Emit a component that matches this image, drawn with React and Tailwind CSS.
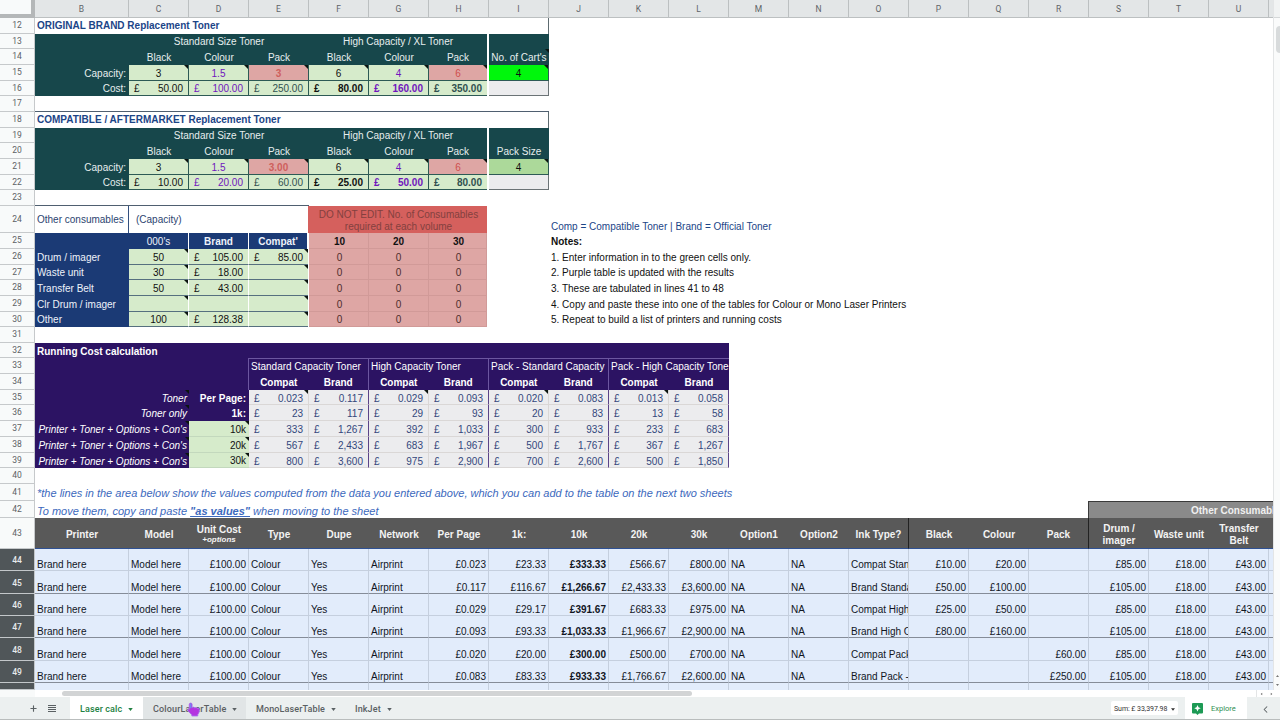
import { Plus, ChevronLeft } from "lucide-react";

const columns = "CDEFGHIJKLMNOPQRSTU".split("");

const TEAL = "bg-[#17474b] text-[#e6eeee]";
const GREEN = "bg-[#d6ebcb]";
const PINK = "bg-[#dea6a4]";
const NAVY = "bg-[#1b3a75] text-[#eef2fa]";
const PURPLE = "bg-[#2c1363] text-white";
const PURPLE_TEXT = "text-[#7015bd]";
const GRAY = "bg-[#ececee]";

const SELECTED = [
    { n: 44, h: "h-[22px]", perPage: "£0.023", k1: "£23.33", k10: "£333.33", k20: "£566.67", k30: "£800.00", ink: "Compat Stan", black: "£10.00", colour: "£20.00", pack: "", drum: "£85.00" },
    { n: 45, h: "h-[23px]", perPage: "£0.117", k1: "£116.67", k10: "£1,266.67", k20: "£2,433.33", k30: "£3,600.00", ink: "Brand Standa", black: "£50.00", colour: "£100.00", pack: "", drum: "£105.00" },
    { n: 46, h: "h-[22px]", perPage: "£0.029", k1: "£29.17", k10: "£391.67", k20: "£683.33", k30: "£975.00", ink: "Compat High", black: "£25.00", colour: "£50.00", pack: "", drum: "£85.00" },
    { n: 47, h: "h-[22px]", perPage: "£0.093", k1: "£93.33", k10: "£1,033.33", k20: "£1,966.67", k30: "£2,900.00", ink: "Brand High C", black: "£80.00", colour: "£160.00", pack: "", drum: "£105.00" },
    { n: 48, h: "h-[23px]", perPage: "£0.020", k1: "£20.00", k10: "£300.00", k20: "£500.00", k30: "£700.00", ink: "Compat Pack", black: "", colour: "", pack: "£60.00", drum: "£85.00" },
    { n: 49, h: "h-[22px]", perPage: "£0.083", k1: "£83.33", k10: "£933.33", k20: "£1,766.67", k30: "£2,600.00", ink: "Brand Pack -", black: "", colour: "", pack: "£250.00", drum: "£105.00" },
];

const running = [
    { n: 35, h: "h-[15px]", label: "Toner", unit: "Per Page:", v: ["0.023", "0.117", "0.029", "0.093", "0.020", "0.083", "0.013", "0.058"] },
    { n: 36, h: "h-[16px]", label: "Toner only", unit: "1k:", v: ["23", "117", "29", "93", "20", "83", "13", "58"] },
    { n: 37, h: "h-[16px]", label: "Printer + Toner + Options + Con's", unit: "10k", v: ["333", "1,267", "392", "1,033", "300", "933", "233", "683"] },
    { n: 38, h: "h-[16px]", label: "Printer + Toner + Options + Con's", unit: "20k", v: ["567", "2,433", "683", "1,967", "500", "1,767", "367", "1,267"] },
    { n: 39, h: "h-[15px]", label: "Printer + Toner + Options + Con's", unit: "30k", v: ["800", "3,600", "975", "2,900", "700", "2,600", "500", "1,850"] },
];

const consumables = [
    { n: 26, h: "h-[16px]", name: "Drum / imager", cap: "50", brand: "105.00", compat: "85.00", note: "1. Enter information in to the green cells only." },
    { n: 27, h: "h-[15px]", name: "Waste unit", cap: "30", brand: "18.00", note: "2. Purple table is updated with the results" },
    { n: 28, h: "h-[16px]", name: "Transfer Belt", cap: "50", brand: "43.00", note: "3. These are tabulated in lines 41 to 48" },
    { n: 29, h: "h-[16px]", name: "Clr Drum / imager", cap: "", brand: "", note: "4. Copy and paste these into one of the tables for Colour or Mono Laser Printers" },
    { n: 30, h: "h-[15px]", name: "Other", cap: "100", brand: "128.38", note: "5. Repeat to build a list of printers and running costs" },
];

function Row({ n, h = "h-[16px]", selected, children }) {
    return (
        <div className={`flex shrink-0 ${h}`}>
            <div
                className={`flex w-[35px] shrink-0 items-center justify-center border-r border-b font-[Roboto,sans-serif] text-[8.5px] leading-none ${
                    selected
                        ? "border-[#c3c7ca] bg-[#505659] pt-0.5 font-medium text-[#e8eaed]"
                        : "border-[#c6c9cb] bg-[#f8fafa] text-[#5c6164]"
                }`}
            >
                {n}
            </div>
            {children}
        </div>
    );
}

function Cell({ w = "w-15", align = "justify-center", pad = "pt-px", className = "", note, children }) {
    return (
        <div className={`relative flex shrink-0 items-center whitespace-nowrap ${w} ${align} ${pad} ${className}`}>
            {children}
            {note && (
                <span className="absolute top-0 right-0 border-t-4 border-l-4 border-t-[#0b1410] border-l-transparent" />
            )}
        </div>
    );
}

function Money({ value, className = "", ...rest }) {
    return (
        <Cell align="justify-between" pad="pt-0.5" className={`pr-[5px] pl-[5px] ${className}`} {...rest}>
            {value && <span>£</span>}
            <span>{value}</span>
        </Cell>
    );
}

function Gap() {
    return <div className="w-0.5 shrink-0 bg-white" />;
}

function TonerTable({ start, title, pack, packNote, packColor, packCap, black, colour, packs, high }) {
    const line = "border-r border-b border-[#2d5a55]";
    return (
        <>
            <Row n={start}>
                <Cell w="w-[514px]" align="justify-start" pad="pt-0" className="border-r border-[#5d6b70] pl-0.5 font-bold text-[#1c4587]">
                    {title}
                </Cell>
            </Row>
            <Row n={start + 1} h="h-[15px]">
                <Cell w="w-[94px]" className={TEAL} />
                <Cell w="w-45" className={TEAL}>Standard Size Toner</Cell>
                <Cell w="w-[178px]" className={TEAL}>High Capacity / XL Toner</Cell>
                <Gap />
                <Cell className={TEAL} />
            </Row>
            <Row n={start + 2}>
                <Cell w="w-[94px]" className={TEAL} />
                <Cell className={TEAL}>Black</Cell>
                <Cell className={TEAL}>Colour</Cell>
                <Cell className={TEAL}>Pack</Cell>
                <Cell className={TEAL}>Black</Cell>
                <Cell className={TEAL}>Colour</Cell>
                <Cell w="w-[58px]" className={TEAL}>Pack</Cell>
                <Gap />
                <Cell className={TEAL} note={packNote}>{pack}</Cell>
            </Row>
            <Row n={start + 3}>
                <Cell w="w-[94px]" align="justify-end" className={`${TEAL} pr-[3px]`}>Capacity:</Cell>
                <Cell pad="pt-0.5" note className={`${GREEN} ${line}`}>3</Cell>
                <Cell pad="pt-0.5" note className={`${GREEN} ${line} ${PURPLE_TEXT}`}>1.5</Cell>
                <Cell pad="pt-0.5" note className={`${PINK} ${line} font-bold text-[#cf5f5c]`}>{packCap}</Cell>
                <Cell pad="pt-0.5" note className={`${GREEN} ${line}`}>6</Cell>
                <Cell pad="pt-0.5" note className={`${GREEN} ${line} ${PURPLE_TEXT}`}>4</Cell>
                <Cell pad="pt-0.5" note w="w-[58px]" className={`${PINK} border-b border-[#2d5a55] text-[#cf4f4c]`}>6</Cell>
                <Gap />
                <Cell pad="pt-0.5" note className={`${packColor} ${line}`}>4</Cell>
            </Row>
            <Row n={start + 4} h="h-[15px]">
                <Cell w="w-[94px]" align="justify-end" className={`${TEAL} pr-[3px]`}>Cost:</Cell>
                <Money value={black} className={`${GREEN} ${line}`} />
                <Money value={colour} className={`${GREEN} ${line} ${PURPLE_TEXT}`} />
                <Money value={packs} className={`${GREEN} ${line} text-[#31504f]`} />
                <Money value={high[0]} className={`${GREEN} ${line} font-bold`} />
                <Money value={high[1]} className={`${GREEN} ${line} font-bold ${PURPLE_TEXT}`} />
                <Money w="w-[58px]" value={high[2]} className={`${GREEN} border-b border-[#2d5a55] font-bold text-[#31504f]`} />
                <Gap />
                <Cell className={`${GRAY} border-r border-b border-[#6b7376]`} />
            </Row>
            <Row n={start + 5}>
                <Cell w={start === 12 ? "w-[514px]" : "w-[274px]"} className="border-b border-[#4f5f70]" />
            </Row>
        </>
    );
}

function Consumables() {
    return (
        <>
            <Row n={24} h="h-[27px]">
                <Cell w="w-[94px]" align="justify-start" className="border-r border-[#33507f] pl-0.5 text-[#2c4470]">
                    Other consumables
                </Cell>
                <Cell w="w-[179px]" align="justify-start" className="pl-[7px] text-[#2c4470]">
                    (Capacity)
                </Cell>
                <Cell w="w-[179px]" pad="pt-0.5" className="bg-[#d5605d] pl-0.5 text-center leading-3 text-[#83403f]">
                    DO NOT EDIT. No. of Consumables
                    <br />
                    required at each volume
                </Cell>
                <Cell w="w-[300px]" align="justify-start" pad="pt-[14px]" className="pl-[64px] text-[#1c4587]">
                    Comp = Compatible Toner | Brand = Official Toner
                </Cell>
            </Row>
            <Row n={25}>
                <Cell w="w-[94px]" className={NAVY} />
                <Cell className={`${NAVY} border-r border-white`}>000's</Cell>
                <Cell className={`${NAVY} border-r border-white font-bold`}>Brand</Cell>
                <Cell w="w-[58px]" className={`${NAVY} font-bold`}>Compat'</Cell>
                <Gap />
                {["10", "20", "30"].map((v, i) => (
                    <Cell
                        key={v}
                        pad="pt-0.5"
                        w={i === 2 ? "w-[58px]" : "w-15"}
                        className={`${PINK} border-r border-b border-[#d19a98] font-bold ${i === 1 ? "" : "pl-0.5"}`}
                    >
                        {v}
                    </Cell>
                ))}
                <Cell align="justify-start" className="pl-[64px] font-bold">Notes:</Cell>
            </Row>
            {consumables.map((c) => (
                <Row key={c.n} n={c.n} h={c.h}>
                    <Cell w="w-[94px]" align="justify-start" className={`${NAVY} pl-0.5`}>{c.name}</Cell>
                    <Cell pad="pt-0.5" note className={`${GREEN} border-r border-b border-r-white border-b-[#56707f]`}>{c.cap}</Cell>
                    <Money value={c.brand} className={`${GREEN} border-r border-b border-r-white border-b-[#56707f]`} />
                    <Money note w="w-[59px]" value={c.compat} className={`${GREEN} border-b border-b-[#56707f]`} />
                    <div className="w-px shrink-0 bg-white" />
                    {[0, 1, 2].map((i) => (
                        <Cell
                            key={i}
                            pad="pt-0.5"
                            w={i === 2 ? "w-[58px]" : "w-15"}
                            className={`${PINK} border-r border-b border-[#d19a98] text-[#4d2c2c] ${i === 1 ? "" : "pl-0.5"}`}
                        >
                            0
                        </Cell>
                    ))}
                    <Cell align="justify-start" className="pl-[64px]">{c.note}</Cell>
                </Row>
            ))}
        </>
    );
}

function RunningCosts() {
    const groups = ["Standard Capacity Toner", "High Capacity Toner", "Pack - Standard Capacity", "Pack - High Capacity Tone"];
    return (
        <>
            <Row n={32} h="h-[15px]">
                <Cell w="w-[694px]" align="justify-start" pad="pt-0.5" className={`${PURPLE} pl-0.5 font-bold`}>
                    Running Cost calculation
                </Cell>
            </Row>
            <Row n={33}>
                <Cell w="w-[213px]" className={PURPLE} />
                {groups.map((g, i) => (
                    <Cell
                        key={g}
                        w={i === 3 ? "w-[121px]" : "w-30"}
                        align="justify-start"
                        className={`${PURPLE} border-t border-l border-[#6c56a0] pl-0.5 text-[#ece6f7]`}
                    >
                        {g}
                    </Cell>
                ))}
            </Row>
            <Row n={34}>
                <Cell w="w-[213px]" className={PURPLE} />
                {groups.map((g, i) => (
                    <Cell key={g} w={i === 3 ? "w-[121px]" : "w-30"} className={`${PURPLE} border-l border-[#6c56a0] font-bold`}>
                        <span className="w-15 text-center">Compat</span>
                        <span className="w-15 text-center">Brand</span>
                    </Cell>
                ))}
            </Row>
            {running.map((r) => (
                <Row key={r.n} n={r.n} h={r.h}>
                    <Cell note w="w-[154px]" align="justify-end" pad="pt-0.5" className={`${PURPLE} pr-0.5 italic`}>
                        {r.label}
                    </Cell>
                    <Cell
                        note={r.n > 36}
                        align="justify-end"
                        pad="pt-0.5"
                        className={r.n > 36 ? `${GREEN} border-b border-[#c3d8bd] pr-[3px]` : `${PURPLE} pr-[3px] font-bold`}
                    >
                        {r.unit}
                    </Cell>
                    {r.v.map((v, i) => (
                        <Money
                            key={i}
                            value={v}
                            note={r.n === 35 && i % 2 === 0}
                            pad="pt-[3px]"
                            className={`${GRAY} border-r border-b border-b-[#dad7d6] text-[#33477c] ${
                                i % 2 ? "border-r-[#5b4488]" : "border-r-[#dad7d6]"
                            }`}
                        />
                    ))}
                </Row>
            ))}
        </>
    );
}

function Results() {
    const heads = ["Type", "Dupe", "Network", "Per Page", "1k:", "10k", "20k", "30k", "Option1", "Option2", "Ink Type?", "Black", "Colour", "Pack"];
    const dark = "bg-[#595959] font-bold text-[#f3f3f3] border-b border-[#2f5193]";
    return (
        <>
            <Row n={41} h="h-[17px]">
                <Cell align="justify-start" pad="pt-0.5" className="pl-0.5 text-[11px] text-[#3c69bd] italic">
                    *the lines in the area below show the values computed from the data you entered above, which you can add to the table on the next two sheets
                </Cell>
            </Row>
            <Row n={42} h="h-[17px]">
                <Cell w="w-[1053px]" align="justify-start" pad="pt-[3px]" className="pl-0.5 text-[11px] text-[#3c69bd] italic">
                    To move them, copy and paste&nbsp;<b className="underline">"as values"</b>&nbsp;when moving to the sheet
                </Cell>
                <Cell w="w-[187px]" align="justify-start" className="border-t border-l border-[#3a3a3a] bg-[#8a8a8a] pl-[102px] font-bold text-[#f0f0f0]">
                    Other Consumabl
                </Cell>
            </Row>
            <Row n={43} h="h-[31px]">
                <Cell w="w-[94px]" pad="pt-[3px]" className={dark}>Printer</Cell>
                <Cell pad="pt-[3px]" className={dark}>Model</Cell>
                <Cell pad="pt-0.5" className={`${dark} flex-col justify-center leading-[11px]`}>
                    <span>Unit Cost</span>
                    <span className="text-[8px] leading-[9px] italic">+options</span>
                </Cell>
                {heads.map((h) => (
                    <Cell key={h} pad="pt-[3px]" className={`${dark} ${h === "Ink Type?" || h === "Pack" ? "border-r border-r-[#222]" : ""}`}>
                        {h}
                    </Cell>
                ))}
                <Cell pad="pt-[3px]" className={`${dark} text-center leading-3`}>Drum /<br />imager</Cell>
                <Cell pad="pt-[3px]" className={dark}>Waste unit</Cell>
                <Cell pad="pt-[3px]" className={`${dark} text-center leading-3`}>Transfer<br />Belt</Cell>
                <Cell className={dark} />
            </Row>
            {SELECTED.map((r) => {
                const base = `items-end! bg-[#e2ecfb] border-r border-b border-r-[#c5cfde] leading-[11px] text-[#11161f] ${
                    r.n % 2 ? "border-b-[#858c98]" : "border-b-[#c5cfde]"
                }`;
                const left = { align: "justify-start", className: `${base} pl-0.5` };
                const right = { align: "justify-end", className: `${base} pr-0.5` };
                return (
                    <Row key={r.n} n={r.n} h={r.h} selected>
                        <Cell w="w-[94px]" {...left}>Brand here</Cell>
                        <Cell {...left}>Model here</Cell>
                        <Cell {...right}>£100.00</Cell>
                        <Cell {...left}>Colour</Cell>
                        <Cell {...left}>Yes</Cell>
                        <Cell {...left}>Airprint</Cell>
                        <Cell {...right}>{r.perPage}</Cell>
                        <Cell {...right}>{r.k1}</Cell>
                        <Cell {...right}><b>{r.k10}</b></Cell>
                        <Cell {...right}>{r.k20}</Cell>
                        <Cell {...right}>{r.k30}</Cell>
                        <Cell {...left}>NA</Cell>
                        <Cell {...left}>NA</Cell>
                        <Cell align="justify-start" className={`${base} overflow-hidden pl-0.5`}>{r.ink}</Cell>
                        <Cell {...right}>{r.black}</Cell>
                        <Cell {...right}>{r.colour}</Cell>
                        <Cell {...right}>{r.pack}</Cell>
                        <Cell {...right}>{r.drum}</Cell>
                        <Cell {...right}>£18.00</Cell>
                        <Cell {...right}>£43.00</Cell>
                        <Cell className={base} />
                    </Row>
                );
            })}
            <Row n="" h="h-[7px]" selected>
                <Cell w="w-[94px]" className="border-r border-[#c5cfde] bg-[#e2ecfb]" />
                {[...columns, "V"].map((c) => (
                    <Cell key={c} className="border-r border-[#c5cfde] bg-[#e2ecfb]" />
                ))}
            </Row>
        </>
    );
}

function Caret({ size = "h-[3px] w-[5px]", className = "" }) {
    return (
        <svg viewBox="0 0 6 4" className={`shrink-0 ${size} ${className}`} fill="currentColor">
            <path d="M0 0h6L3 4z" />
        </svg>
    );
}

function Pointer() {
    return (
        <svg viewBox="0 0 14 16" className="absolute top-[5px] left-[44px] h-[15px] w-[13px]">
            <path
                d="M4 1c.9 0 1.500.6 1.500 1.500V6l1.500-.5 1.400.7 1.500-.4 1.100.9c1.300-.4 2.300.3 2.300 1.500 0 2.600-.5 3.800-1.700 5.300V15H5.200v-1.300C3.600 12.500 2 10.600.9 9c-.6-1 .6-1.800 1.500-1V2.500C2.400 1.600 3.100 1 4 1z"
                fill="#b434e0"
                stroke="#a774ee"
                strokeWidth=".9"
            />
            <path d="M4 1.600v5" stroke="#6f8df0" strokeWidth="1.400" />
        </svg>
    );
}

function TabBar() {
    return (
        <div className="flex h-[23px] shrink-0 items-stretch border-b border-[#b9bdbd] bg-[#ecf0f0] font-[Roboto,sans-serif] text-[9px] font-medium tracking-[0.12px] text-[#5a6063]">
            <div className="flex w-[70px] items-center pl-[29px]">
                <Plus className="size-[9px]" strokeWidth={3} />
                <svg viewBox="0 0 8 7" className="ml-[10px] h-[7px] w-2" fill="currentColor" shapeRendering="crispEdges">
                    <path d="M0 0h8v1H0zM0 2h8v1H0zM0 4h8v1H0zM0 6h8v1H0z" />
                </svg>
            </div>
            <div className="flex w-[73px] items-center bg-white pt-[3px] pl-[10px] text-[#218041]">
                Laser calc
                <Caret className="ml-[6px]" />
            </div>
            <div className="relative flex w-[103px] items-center bg-[#e1e5e6] pt-[3px] pl-[10px] tracking-[0.16px]">
                ColourLaserTable
                <Caret className="ml-[6px]" />
                <Pointer />
            </div>
            <div className="flex w-[99px] items-center pt-[3px] pl-[10px]">
                MonoLaserTable
                <Caret className="ml-[6px]" />
            </div>
            <div className="flex items-center pt-[3px] pl-[10px]">
                InkJet
                <Caret className="ml-[6px]" />
            </div>
            <div className="my-1 mr-[7px] ml-auto flex w-[67px] items-center rounded-xs bg-white pt-0.5 pl-[3px] text-[7px] font-normal tracking-[-0.05px] whitespace-nowrap text-[#333]">
                Sum: £ 33,397.98
                <Caret size="h-[3px] w-1" className="ml-1" />
            </div>
            <div className="flex w-[62px] items-center bg-white pt-0.5 pl-[7px] text-[7.5px] font-normal tracking-normal text-[#2f8f52]">
                <svg viewBox="0 0 22 24" className="mr-[8px] h-3 w-[11px]">
                    <path d="M2 0h18a2 2 0 0 1 2 2v17a2 2 0 0 1-2 2h-6l-3 3-3-3H2a2 2 0 0 1-2-2V2a2 2 0 0 1 2-2z" fill="#1d9a55" />
                    <path d="M11 4l2 4.500 4.500 2-4.500 2-2 4.500-2-4.500-4.500-2 4.500-2z" fill="#fff" />
                </svg>
                Explore
            </div>
            <div className="flex w-[33px] items-center justify-center pt-[3px] pl-1">
                <ChevronLeft className="size-[11px]" strokeWidth={2.2} />
            </div>
        </div>
    );
}

export default function App() {
    return (
        <div className="flex h-[720px] w-[1280px] flex-col overflow-hidden bg-white font-['Liberation_Sans',Arial,sans-serif] text-[10px] leading-none text-[#111]">
            <div className="flex min-h-0 flex-1">
                <div className="flex w-[1274px] shrink-0 flex-col overflow-hidden border-r border-[#e3e5e6]">
                    <div className="flex h-[18px] shrink-0 font-[Roboto,sans-serif] text-[8.5px] text-[#5f6467]">
                        <div className="w-[35px] shrink-0 border-r-4 border-b-4 border-[#b4b7b8] bg-[#f8fafa]" />
                        <Cell w="w-[94px]" className="border-r border-b border-[#bcc0c1] bg-[#e3e6e7]">B</Cell>
                        {columns.map((c) => (
                            <Cell key={c} className="border-r border-b border-[#bcc0c1] bg-[#e3e6e7]">{c}</Cell>
                        ))}
                        <Cell className="border-b border-[#bcc0c1] bg-[#e3e6e7]" />
                    </div>
                    <TonerTable
                        start={12}
                        title="ORIGINAL BRAND Replacement Toner"
                        pack="No. of Cart's"
                        packNote
                        packColor="bg-[#00f70c]"
                        packCap="3"
                        black="50.00"
                        colour="100.00"
                        packs="250.00"
                        high={["80.00", "160.00", "350.00"]}
                    />
                    <TonerTable
                        start={18}
                        title="COMPATIBLE / AFTERMARKET Replacement Toner"
                        pack="Pack Size"
                        packColor="bg-[#acd99a]"
                        packCap="3.00"
                        black="10.00"
                        colour="20.00"
                        packs="60.00"
                        high={["25.00", "50.00", "80.00"]}
                    />
                    <Consumables />
                    <Row n={31} />
                    <RunningCosts />
                    <Row n={40} />
                    <Results />
                </div>
                <div className="flex w-1.5 shrink-0 flex-col bg-[#fafbfb] text-[#777]">
                    <div className="h-[18px] border-b border-[#d5d8d9] bg-[#f1f3f3]" />
                    <div className="mt-2 ml-0.5 h-[27px] rounded-l-sm bg-[#d8dbdc]" />
                    <div className="mt-auto flex flex-col items-end gap-[7px] pr-px pb-1">
                        <Caret size="h-[2px] w-[3px]" className="rotate-180" />
                        <Caret size="h-[2px] w-[3px]" />
                    </div>
                </div>
            </div>
            <div className="flex h-[7px] shrink-0 bg-white">
                <div className="w-[35px] bg-[#f8fafa]" />
                <div className="mt-px ml-[27px] h-[5px] w-[630px] rounded-full bg-[#d2d4d5]" />
                <div className="ml-auto flex w-6 items-center gap-[7px] border-l border-[#e3e5e6] pl-[3px] text-[#777]">
                    <Caret size="h-[2px] w-[3px]" className="rotate-90" />
                    <Caret size="h-[2px] w-[3px]" className="-rotate-90" />
                </div>
            </div>
            <TabBar />
        </div>
    );
}
